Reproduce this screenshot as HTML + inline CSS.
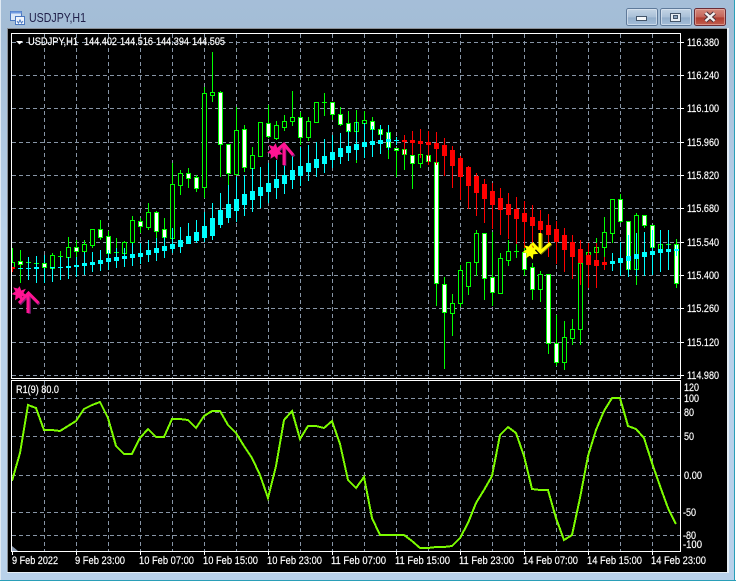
<!DOCTYPE html>
<html><head><meta charset="utf-8"><title>USDJPY,H1</title>
<style>
html,body{margin:0;padding:0;background:#fff;width:738px;height:582px;overflow:hidden}
svg{display:block}
text{font-family:"Liberation Sans",sans-serif;font-size:11px;fill:#fff;stroke:#fff;stroke-width:.18px}
</style></head><body>
<svg width="738" height="582" viewBox="0 0 738 582" xmlns="http://www.w3.org/2000/svg">
<defs>
<linearGradient id="fr" x1="0" y1="0" x2="0" y2="1"><stop offset="0" stop-color="#a5bed8"/><stop offset=".05" stop-color="#a4bdd6"/><stop offset=".4" stop-color="#b9d1ea"/><stop offset="1" stop-color="#b9d1ea"/></linearGradient>
<linearGradient id="bt" x1="0" y1="0" x2="0" y2="1"><stop offset="0" stop-color="#c6d6e6"/><stop offset=".5" stop-color="#a9c0d8"/><stop offset=".55" stop-color="#93aecb"/><stop offset="1" stop-color="#a5bfd9"/></linearGradient>
<linearGradient id="cl" x1="0" y1="0" x2="0" y2="1"><stop offset="0" stop-color="#d68e80"/><stop offset=".5" stop-color="#c4655a"/><stop offset=".55" stop-color="#b03d30"/><stop offset="1" stop-color="#c26050"/></linearGradient>
<clipPath id="c1"><rect x="12" y="34" width="668" height="344"/></clipPath>
<clipPath id="c2"><rect x="12" y="381" width="668" height="170"/></clipPath>
</defs>
<rect x="0" y="0" width="735" height="580" fill="url(#fr)"/>
<rect x="0" y="580" width="736" height="1" fill="#2a9fb8"/>
<rect x="734" y="0" width="1" height="581" fill="#2a9fb8"/>
<rect x="0" y="0" width="1" height="580" fill="#dfe9f3"/>
<rect x="7" y="28" width="720" height="1" fill="#8a8f96"/>
<rect x="7" y="28" width="1" height="545" fill="#8a8f96"/>
<rect x="727" y="28" width="2" height="545" fill="#e4edf5"/>
<rect x="7" y="572" width="722" height="1" fill="#e4edf5"/>
<rect x="8" y="29" width="719" height="543" fill="#000"/>

<!-- title icon -->
<rect x="10.500" y="11.500" width="11" height="9" fill="#dbe8f8" stroke="#4a78c0"/>
<rect x="10.500" y="11.500" width="11" height="2" fill="#6f9ae0"/>
<rect x="15.500" y="16.500" width="9" height="8" fill="#f0f5fc" stroke="#4a78c0"/>
<path d="M17 21l1.500 2 1.500-3 1.500 3 1.500-2" fill="none" stroke="#4a78c0"/>
<text x="29" y="22" textLength="57" lengthAdjust="spacingAndGlyphs" style="font-size:13px;fill:#20204a;stroke:none">USDJPY,H1</text>

<!-- buttons -->
<rect x="626.500" y="8.500" width="31" height="17" rx="2" fill="url(#bt)" stroke="#5f7a9a"/>
<rect x="627.500" y="9.500" width="29" height="15" rx="1" fill="none" stroke="#dbe6f1" stroke-opacity=".7"/>
<rect x="636.500" y="16.500" width="10" height="4" fill="#f4f7fa" stroke="#44556a"/>
<rect x="660.500" y="8.500" width="31" height="17" rx="2" fill="url(#bt)" stroke="#5f7a9a"/>
<rect x="661.500" y="9.500" width="29" height="15" rx="1" fill="none" stroke="#dbe6f1" stroke-opacity=".7"/>
<rect x="670.500" y="13.500" width="10" height="8" fill="#e8eef4" stroke="#44556a"/>
<rect x="673.500" y="15.500" width="4" height="3" fill="#8fa6bf" stroke="#44556a"/>
<rect x="694.500" y="8.500" width="31" height="17" rx="2" fill="url(#cl)" stroke="#6a2c36"/>
<rect x="695.500" y="9.500" width="29" height="15" rx="1" fill="none" stroke="#e8b8ae" stroke-opacity=".6"/>
<path d="M705.500 13l9 8M714.500 13l-9 8" stroke="#4a3038" stroke-width="4.500" fill="none"/>
<path d="M705.500 13l9 8M714.500 13l-9 8" stroke="#f2f2f2" stroke-width="2.500" fill="none"/>

<!-- pane frames -->
<rect x="11.500" y="33.500" width="669" height="345" fill="#000" stroke="#fff"/>
<rect x="11.500" y="380.500" width="669" height="171" fill="#000" stroke="#fff"/>

<!-- grid -->
<path shape-rendering="crispEdges" fill="none" stroke="#8795a6" stroke-dasharray="4 3" d="M44.500 34V378M76.500 34V378M108.500 34V378M140.500 34V378M172.500 34V378M204.500 34V378M236.500 34V378M268.500 34V378M300.500 34V378M332.500 34V378M364.500 34V378M396.500 34V378M428.500 34V378M460.500 34V378M492.500 34V378M524.500 34V378M556.500 34V378M588.500 34V378M620.500 34V378M652.500 34V378
M44.500 381V551M76.500 381V551M108.500 381V551M140.500 381V551M172.500 381V551M204.500 381V551M236.500 381V551M268.500 381V551M300.500 381V551M332.500 381V551M364.500 381V551M396.500 381V551M428.500 381V551M460.500 381V551M492.500 381V551M524.500 381V551M556.500 381V551M588.500 381V551M620.500 381V551M652.500 381V551
M12 42.500H680M12 75.500H680M12 108.500H680M12 142.500H680M12 175.500H680M12 208.500H680M12 242.500H680M12 275.500H680M12 308.500H680M12 342.500H680M12 375.500H680
M12 398.500H680M12 412.500H680M12 436.500H680M12 475.500H680M12 512.500H680M12 535.500H680"/>

<g clip-path="url(#c1)" shape-rendering="crispEdges">
<path fill="none" stroke="#0f0" d="M12.500 248V268M20.500 250V283M28.500 257V280M36.500 256V283M44.500 255V283M52.500 253V282M60.500 251V280M68.500 237V265M76.500 240V257M84.500 240V256M92.500 229V248M100.500 220V240M108.500 231V253M116.500 238V263M124.500 241V255M132.500 216V243M140.500 218V233M148.500 203V230M156.500 211V240M164.500 218V248M172.500 163V248M180.500 170V195M188.500 168V188M196.500 175V192M204.500 87V198M212.500 52V102M220.500 91V177M228.500 144V187M236.500 107V175M244.500 125V172M252.500 147V170M260.500 122V157M268.500 105V138M276.500 121V140M284.500 115V131M292.500 91V126M300.500 112V145M308.500 117V141M316.500 102V123M324.500 93V116M332.500 102V120M340.500 107V126M348.500 111V131M356.500 110V163M364.500 111V125M372.500 117V130M380.500 125V134M388.500 125V159M396.500 148V177M404.500 149V170M412.500 155V189M420.500 150V168M428.500 155V161M436.500 162V306M444.500 277V369M452.500 294V336M460.500 265V307M468.500 262V295M476.500 230V276M484.500 233V300M492.500 232V306M500.500 253V293M508.500 240V266M516.500 242V258M524.500 245V276M532.500 263V300M540.500 271V302M548.500 274V354M556.500 315V366M564.500 321V370M572.500 319V345M580.500 263V345M588.500 250V256M596.500 238V252M604.500 217V257M612.500 199V243M620.500 194V223M628.500 221V277M636.500 213V285M644.500 215V228M652.500 225V247M660.500 244V252M668.500 244V250M676.500 239V288"/>
<path fill="none" stroke="#0f0" d="M26 262.500h5M34 263.500h5M58 256.500h5M114 252.500h5M322 102.500h5M514 251.500h5M666 244.500h5"/>
<path fill="#000" stroke="#0f0" d="M10.500 262.500h4V267.500h-4zM50.500 255.500h4V268.500h-4zM66.500 247.500h4V257.500h-4zM82.500 244.500h4V251.500h-4zM90.500 229.500h4V245.500h-4zM122.500 242.500h4V253.500h-4zM130.500 220.500h4V242.500h-4zM146.500 212.500h4V227.500h-4zM170.500 184.500h4V238.500h-4zM178.500 173.500h4V185.500h-4zM202.500 93.500h4V187.500h-4zM210.500 92.500h4V95.500h-4zM234.500 130.500h4V174.500h-4zM250.500 155.500h4V168.500h-4zM258.500 122.500h4V156.500h-4zM274.500 125.500h4V138.500h-4zM282.500 121.500h4V127.500h-4zM290.500 117.500h4V121.500h-4zM306.500 121.500h4V137.500h-4zM314.500 102.500h4V122.500h-4zM354.500 122.500h4V131.500h-4zM362.500 120.500h4V123.500h-4zM418.500 154.500h4V163.500h-4zM450.500 303.500h4V313.500h-4zM458.500 270.500h4V303.500h-4zM466.500 262.500h4V286.500h-4zM474.500 233.500h4V262.500h-4zM498.500 258.500h4V293.500h-4zM506.500 251.500h4V260.500h-4zM538.500 274.500h4V289.500h-4zM562.500 337.500h4V362.500h-4zM570.500 329.500h4V338.500h-4zM578.500 263.500h4V329.500h-4zM586.500 252.500h4V255.500h-4zM594.500 247.500h4V252.500h-4zM602.500 232.500h4V247.500h-4zM610.500 199.500h4V233.500h-4zM634.500 215.500h4V269.500h-4zM658.500 244.500h4V252.500h-4z"/>
<path fill="#fff" stroke="#0f0" d="M18.500 261.500h4V264.500h-4zM42.500 263.500h4V267.500h-4zM74.500 247.500h4V251.500h-4zM98.500 229.500h4V237.500h-4zM106.500 236.500h4V253.500h-4zM138.500 221.500h4V226.500h-4zM154.500 212.500h4V231.500h-4zM162.500 229.500h4V237.500h-4zM186.500 173.500h4V178.500h-4zM194.500 177.500h4V188.500h-4zM218.500 92.500h4V144.500h-4zM226.500 144.500h4V173.500h-4zM242.500 129.500h4V167.500h-4zM266.500 123.500h4V136.500h-4zM298.500 117.500h4V137.500h-4zM330.500 102.500h4V114.500h-4zM338.500 114.500h4V124.500h-4zM346.500 123.500h4V131.500h-4zM370.500 121.500h4V129.500h-4zM378.500 129.500h4V134.500h-4zM386.500 132.500h4V147.500h-4zM394.500 148.500h4V150.500h-4zM402.500 149.500h4V154.500h-4zM410.500 155.500h4V163.500h-4zM426.500 155.500h4V161.500h-4zM434.500 162.500h4V283.500h-4zM442.500 284.500h4V312.500h-4zM482.500 233.500h4V278.500h-4zM490.500 277.500h4V292.500h-4zM522.500 252.500h4V269.500h-4zM530.500 267.500h4V289.500h-4zM546.500 274.500h4V343.500h-4zM554.500 343.500h4V362.500h-4zM618.500 199.500h4V221.500h-4zM626.500 221.500h4V269.500h-4zM642.500 215.500h4V225.500h-4zM650.500 225.500h4V247.500h-4zM674.500 244.500h4V283.500h-4z"/>
<!-- cyan -->
<path fill="none" stroke="#0ff" d="M28.500 257V280M36.500 256V283M44.500 255V263M44.500 268V283M52.500 268V282M60.500 257V280M68.500 257V279M76.500 257V277M84.500 252V275M92.500 252V272M100.500 250V271M108.500 250V270M116.500 248V268M124.500 248V267M132.500 243V266M140.500 243V264M148.500 240V262M156.500 238V261M164.500 237V258M172.500 228V253M180.500 227V253M188.500 223V244M196.500 220V243M204.500 212V242M212.500 203V240M220.500 193V228M228.500 185V223M236.500 177V222M244.500 175V216M252.500 168V212M260.500 167V208M268.500 163V203M276.500 160V199M284.500 153V194M292.500 155V189M300.500 147V186M308.500 145V181M316.500 142V177M324.500 139V173M332.500 135V168M340.500 133V164M348.500 130V161M356.500 122V160M364.500 123V158M372.500 126V157M380.500 125V154M388.500 125V150M396.500 137V145M612.500 253V271M620.500 242V276M628.500 235V277M636.500 233V276M644.500 232V276M652.500 230V275M660.500 230V272M668.500 230V270M676.500 245V256"/>
<path fill="#0ff" d="M18 268h5v1h-5zM26 268h5v1h-5zM34 267h5v2h-5zM50 267h5v1h-5zM58 267h5v1h-5zM66 266h5v2h-5zM74 265h5v2h-5zM82 263h5v3h-5zM90 262h5v3h-5zM98 260h5v4h-5zM106 258h5v4h-5zM114 257h5v4h-5zM122 256h5v3h-5zM130 254h5v4h-5zM138 253h5v4h-5zM146 250h5v5h-5zM154 248h5v5h-5zM162 246h5v5h-5zM170 244h5v5h-5zM178 240h5v7h-5zM186 236h5v8h-5zM194 232h5v9h-5zM202 226h5v12h-5zM210 218h5v18h-5zM218 210h5v15h-5zM226 204h5v14h-5zM234 199h5v12h-5zM242 194h5v11h-5zM250 191h5v9h-5zM258 187h5v9h-5zM266 183h5v9h-5zM274 179h5v9h-5zM282 175h5v9h-5zM290 170h5v10h-5zM298 166h5v10h-5zM306 163h5v9h-5zM314 159h5v9h-5zM322 156h5v8h-5zM330 152h5v8h-5zM338 148h5v9h-5zM346 146h5v7h-5zM354 144h5v6h-5zM362 142h5v5h-5zM370 141h5v4h-5zM378 140h5v4h-5zM386 139h5v3h-5zM394 140h5v1h-5zM610 261h5v3h-5zM618 258h5v5h-5zM626 256h5v5h-5zM634 254h5v5h-5zM642 252h5v5h-5zM650 251h5v4h-5zM658 249h5v4h-5zM666 249h5v3h-5zM674 249h5v2h-5z"/>
<!-- red -->
<path fill="none" stroke="#f00" d="M12.500 267V272M404.500 135V155M412.500 131V155M420.500 129V158M428.500 131V165M436.500 132V165M444.500 138V176M452.500 146V188M460.500 156V200M468.500 166V209M476.500 173V216M484.500 179V223M492.500 183V229M500.500 188V235M508.500 193V239M516.500 197V244M524.500 201V248M532.500 205V250M540.500 210V253M548.500 214V257M556.500 221V264M564.500 228V272M572.500 235V279M580.500 240V285M588.500 243V288M596.500 243V288M604.500 257V270"/>
<path fill="#f00" d="M10 267h5v2h-5zM402 140h5v2h-5zM410 140h5v3h-5zM418 141h5v3h-5zM426 142h5v3h-5zM434 143h5v6h-5zM442 145h5v11h-5zM450 150h5v16h-5zM458 158h5v19h-5zM466 167h5v19h-5zM474 176h5v17h-5zM482 184h5v15h-5zM490 191h5v14h-5zM498 198h5v12h-5zM506 204h5v11h-5zM514 209h5v10h-5zM522 213h5v9h-5zM530 217h5v9h-5zM538 221h5v9h-5zM546 225h5v10h-5zM554 229h5v13h-5zM562 235h5v15h-5zM570 242h5v15h-5zM578 249h5v14h-5zM586 255h5v10h-5zM594 260h5v6h-5zM602 262h5v3h-5z"/>
</g>

<!-- arrows + stars -->
<g>
<path d="M19 303.500l9.500-10 10 10M28.500 294V313" fill="none" stroke="#7a1a70" stroke-width="3" transform="translate(.8 .8)"/>
<path d="M19 303l9.500-10 10 10M28 294V313" fill="none" stroke="#ff1493" stroke-width="3"/>
<path d="M19.500 287l1.500 4 4-1.500-2 3.500 3 2.500-4 .5-.5 4.500-2.500-3.500-3.500 2.500.5-4.500-3.500-1 3.500-2.500-2-3.500 4 1z" fill="#ff1493" stroke="#ff1493" stroke-width=".8"/>
<path d="M271 155.500l13-11 9.500 11M284 146V165" fill="none" stroke="#7a1a70" stroke-width="3" transform="translate(.8 .8)"/>
<path d="M271 155l13-11 9 11M284 146V165" fill="none" stroke="#ff1493" stroke-width="3"/>
<path d="M275.500 144l1.500 4.500 4.500-1.500-2.500 4 3 3-4.500.5-.5 4.500-2.500-3.500-3.500 2.500.5-4.500-3.500-1 3.500-3-2-4 4 1.500z" fill="#ff1493" stroke="#ff1493" stroke-width=".8"/>
<path d="M532 243l8.500 9 10-9M540.500 233V250" fill="none" stroke="#77770a" stroke-width="3" transform="translate(.8 .8)"/>
<path d="M532 243l8.500 9 10-9M540 233V250" fill="none" stroke="#ff0" stroke-width="3"/>
<path d="M531 244l1.500 4 4.500-1-2.500 3.500 3 3-4.500.5-.5 4.500-2.500-3.500-3.500 2.500.5-4.500-3.500-1 3.500-2.500-2-3.500 4 1z" fill="#ff0" stroke="#ff0" stroke-width=".8"/>
</g>

<!-- RSI -->
<g clip-path="url(#c2)">
<polyline fill="none" stroke="#7cfc00" stroke-width="2" shape-rendering="crispEdges" points="12,481 20,453 28,405 36,408 44,430 52,430 60,431 68,426 76,421 84,409 92,405 100,402 108,418 116,446 124,454 132,454 140,438 148,429 156,437 164,437 172,419 180,419 188,420 196,428 204,416 212,411 220,411 228,425 236,433 244,446 252,458 260,475 268,498 276,466 284,420 292,411 300,439 308,426 316,426 324,428 332,421 340,444 348,480 356,488 364,477 372,518 380,535 388,535 396,535 404,535 412,541 420,548 428,548 436,547 444,547 452,546 460,538 468,523 476,503 484,490 492,476 500,435 508,427 516,433 524,456 532,489 540,490 548,490 556,518 564,540 572,535 580,498 588,456 596,430 604,411 612,398 620,398 628,426 636,429 644,438 652,463 660,486 668,508 676,524"/>
</g>

<!-- ticks -->
<path shape-rendering="crispEdges" fill="none" stroke="#fff" d="M681 42.500h3M681 75.500h3M681 108.500h3M681 142.500h3M681 175.500h3M681 208.500h3M681 242.500h3M681 275.500h3M681 308.500h3M681 342.500h3M681 375.500h3M12.500 552v3M76.500 552v3M140.500 552v3M204.500 552v3M268.500 552v3M332.500 552v3M396.500 552v3M460.500 552v3M524.500 552v3M588.500 552v3M652.500 552v3"/>
<path d="M12 546l6 5h-6z" fill="#8a9ab0"/>
<path d="M16 41h7l-3.500 3.500z" fill="#fff"/>

<!-- labels -->
<text x="28" y="45" textLength="50" lengthAdjust="spacingAndGlyphs">USDJPY,H1</text>
<text x="84" y="45" textLength="33" lengthAdjust="spacingAndGlyphs">144.402</text>
<text x="120" y="45" textLength="33" lengthAdjust="spacingAndGlyphs">144.516</text>
<text x="156" y="45" textLength="33" lengthAdjust="spacingAndGlyphs">144.394</text>
<text x="192" y="45" textLength="33" lengthAdjust="spacingAndGlyphs">144.505</text>
<text x="16" y="393" textLength="43" lengthAdjust="spacingAndGlyphs">R1(9) 80.0</text>
<g>
<text x="687" y="46" textLength="32" lengthAdjust="spacingAndGlyphs">116.380</text>
<text x="687" y="79" textLength="32" lengthAdjust="spacingAndGlyphs">116.240</text>
<text x="687" y="112" textLength="32" lengthAdjust="spacingAndGlyphs">116.100</text>
<text x="687" y="146" textLength="32" lengthAdjust="spacingAndGlyphs">115.960</text>
<text x="687" y="179" textLength="32" lengthAdjust="spacingAndGlyphs">115.820</text>
<text x="687" y="212" textLength="32" lengthAdjust="spacingAndGlyphs">115.680</text>
<text x="687" y="246" textLength="32" lengthAdjust="spacingAndGlyphs">115.540</text>
<text x="687" y="279" textLength="32" lengthAdjust="spacingAndGlyphs">115.400</text>
<text x="687" y="312" textLength="32" lengthAdjust="spacingAndGlyphs">115.260</text>
<text x="687" y="346" textLength="32" lengthAdjust="spacingAndGlyphs">115.120</text>
<text x="687" y="379" textLength="32" lengthAdjust="spacingAndGlyphs">114.980</text>
<text x="684" y="391" textLength="15" lengthAdjust="spacingAndGlyphs">120</text>
<text x="684" y="402" textLength="15" lengthAdjust="spacingAndGlyphs">100</text>
<text x="684" y="416" textLength="10" lengthAdjust="spacingAndGlyphs">80</text>
<text x="684" y="440" textLength="10" lengthAdjust="spacingAndGlyphs">50</text>
<text x="684" y="479" textLength="18" lengthAdjust="spacingAndGlyphs">0.00</text>
<text x="683" y="516" textLength="13" lengthAdjust="spacingAndGlyphs">-50</text>
<text x="683" y="539" textLength="13" lengthAdjust="spacingAndGlyphs">-80</text>
<text x="683" y="548" textLength="19" lengthAdjust="spacingAndGlyphs">-100</text>
</g>
<g>
<text x="12" y="564" textLength="46" lengthAdjust="spacingAndGlyphs">9 Feb 2022</text>
<text x="75" y="564" textLength="50" lengthAdjust="spacingAndGlyphs">9 Feb 23:00</text>
<text x="139" y="564" textLength="55" lengthAdjust="spacingAndGlyphs">10 Feb 07:00</text>
<text x="203" y="564" textLength="55" lengthAdjust="spacingAndGlyphs">10 Feb 15:00</text>
<text x="267" y="564" textLength="55" lengthAdjust="spacingAndGlyphs">10 Feb 23:00</text>
<text x="331" y="564" textLength="55" lengthAdjust="spacingAndGlyphs">11 Feb 07:00</text>
<text x="395" y="564" textLength="55" lengthAdjust="spacingAndGlyphs">11 Feb 15:00</text>
<text x="459" y="564" textLength="55" lengthAdjust="spacingAndGlyphs">11 Feb 23:00</text>
<text x="523" y="564" textLength="55" lengthAdjust="spacingAndGlyphs">14 Feb 07:00</text>
<text x="587" y="564" textLength="55" lengthAdjust="spacingAndGlyphs">14 Feb 15:00</text>
<text x="651" y="564" textLength="55" lengthAdjust="spacingAndGlyphs">14 Feb 23:00</text>
</g>
</svg>
</body></html>
